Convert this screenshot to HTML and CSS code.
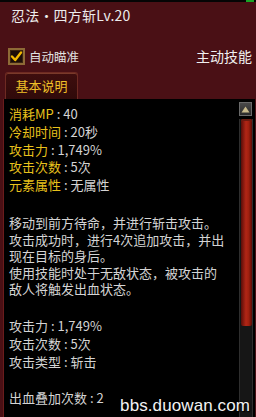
FILE: index.html
```html
<!DOCTYPE html>
<html lang="zh-CN">
<head>
<meta charset="utf-8">
<link rel="stylesheet" href="styles.css">
</head>
<body>
<div class="panel">
  <div class="topbar"><span class="hp"></span></div>
  <div class="title">忍法・四方斩Lv.20</div>
  <div class="optrow">
    <label class="auto">
      <span class="check"><svg width="13" height="13" viewBox="0 0 13 13"><path d="M2 6.5 L5.2 10 L11 2.5" fill="none" stroke="#f2b800" stroke-width="2.4" stroke-linecap="round" stroke-linejoin="round"/></svg></span>
      <span class="autotext">自动瞄准</span>
    </label>
    <span class="kind">主动技能</span>
  </div>
  <div class="tabs"><div class="tab">基本说明</div></div>
  <div class="content">
    <div class="text">
      <div class="stats">
        <div><span class="lab">消耗MP</span> : 40</div>
        <div><span class="lab">冷却时间</span> : 20秒</div>
        <div><span class="lab">攻击力</span> : 1,749%</div>
        <div><span class="lab">攻击次数</span> : 5次</div>
        <div><span class="lab">元素属性</span> : 无属性</div>
      </div>
      <div class="desc">
        <div>移动到前方待命，并进行斩击攻击。</div>
        <div>攻击成功时，进行4次追加攻击，并出</div>
        <div>现在目标的身后。</div>
        <div>使用技能时处于无敌状态，被攻击的</div>
        <div>敌人将触发出血状态。</div>
      </div>
      <div class="attack">
        <div>攻击力 : 1,749%</div>
        <div>攻击次数 : 5次</div>
        <div>攻击类型 : 斩击</div>
      </div>
      <div class="bleed">出血叠加次数 : 2</div>
    </div>
    <div class="scroll">
      <div class="up"><svg width="9" height="7" viewBox="0 0 9 7"><path d="M4.5 0.5 L8.5 6.5 L0.5 6.5 Z" fill="#c9bb8c"/></svg></div>
      <div class="track"><div class="thumb"></div></div>
    </div>
  </div>
  <div class="mark">bbs.duowan.com</div>
</div>
</body>
</html>
```
FILE: styles.css
```css
html, body {
  margin: 0;
  padding: 0;
  background: #000;
}
.panel {
  position: relative;
  width: 256px;
  height: 417px;
  overflow: hidden;
  background: #4a1015;
  display: flex;
  flex-direction: column;
  font-family: "Noto Sans CJK SC", "Noto Sans", sans-serif;
  color: #d6d6d6;
}
.topbar {
  height: 2px;
  background: #050505;
  display: flex;
  justify-content: flex-end;
  flex: none;
}
.hp {
  width: 8px;
  height: 2px;
  margin-right: 2px;
  background: #19a526;
}
.title {
  margin-top: 3px;
  padding-left: 11px;
  font-size: 14px;
  line-height: 20px;
  color: #ececec;
  letter-spacing: 0.2px;
}
.optrow {
  margin-top: 22px;
  height: 18px;
  display: flex;
  align-items: center;
  justify-content: space-between;
  padding: 0 4px 0 8px;
}
.auto {
  display: flex;
  align-items: center;
  gap: 4px;
}
.check {
  width: 13px;
  height: 13px;
  border: 2px solid #8e6a36;
  background: #1c0d08;
  display: flex;
  align-items: center;
  justify-content: center;
  box-shadow: inset 0 0 0 1px #3a2410;
}
.autotext {
  font-size: 12.5px;
  color: #e0e0e0;
}
.kind {
  font-size: 14px;
  color: #f0f0f0;
}
.tabs {
  margin-top: 7px;
  padding-left: 5px;
  display: flex;
}
.tab {
  width: 71px;
  height: 26px;
  border: 1px solid #6e2a22;
  border-bottom: none;
  border-radius: 3px 3px 0 0;
  background: linear-gradient(#3f0e0e, #300a0a);
  color: #f0c028;
  font-size: 13px;
  line-height: 25px;
  text-align: center;
  box-shadow: inset 0 1px 0 #7a3a2a;
}
.content {
  flex: 1;
  margin: 0 1px 0 3px;
  border-left: 1px solid #6a1c1c;
  background: #000;
  display: flex;
}
.text {
  flex: 1;
  padding: 6px 0 0 5px;
  font-size: 13px;
  color: #d4d4d4;
}
.stats {
  line-height: 17.8px;
}
.lab {
  color: #e9c21c;
}
.desc {
  margin-top: 21px;
  line-height: 16.6px;
}
.attack {
  margin-top: 19px;
  line-height: 18px;
}
.bleed {
  margin-top: 18px;
  line-height: 18px;
}
.scroll {
  width: 14px;
  margin-right: 2px;
  padding-top: 3px;
  display: flex;
  flex-direction: column;
}
.up {
  width: 11px;
  height: 12px;
  border: 1px solid #6a6a6a;
  background: linear-gradient(#4a4a4a, #2a2a2a);
  display: flex;
  align-items: center;
  justify-content: center;
}
.track {
  flex: 1;
  margin-top: 3px;
  background: #161616;
  border-left: 1px solid #2e2e2e;
  border-right: 1px solid #2e2e2e;
  padding-left: 1px;
}
.thumb {
  height: 207px;
  border-radius: 2px;
  background: linear-gradient(90deg, #5a0d08, #b22616 45%, #a0200f 70%, #5a0d08);
  box-shadow: inset 0 2px 0 #6c1a10;
}
.mark {
  position: absolute;
  right: 6px;
  bottom: 1px;
  font-family: "Liberation Sans", sans-serif;
  font-size: 17px;
  line-height: 20px;
  color: #f2f2f2;
  text-shadow: 0 0 2px #000, 1px 1px 1px #000;
  letter-spacing: 0.1px;
}
```
